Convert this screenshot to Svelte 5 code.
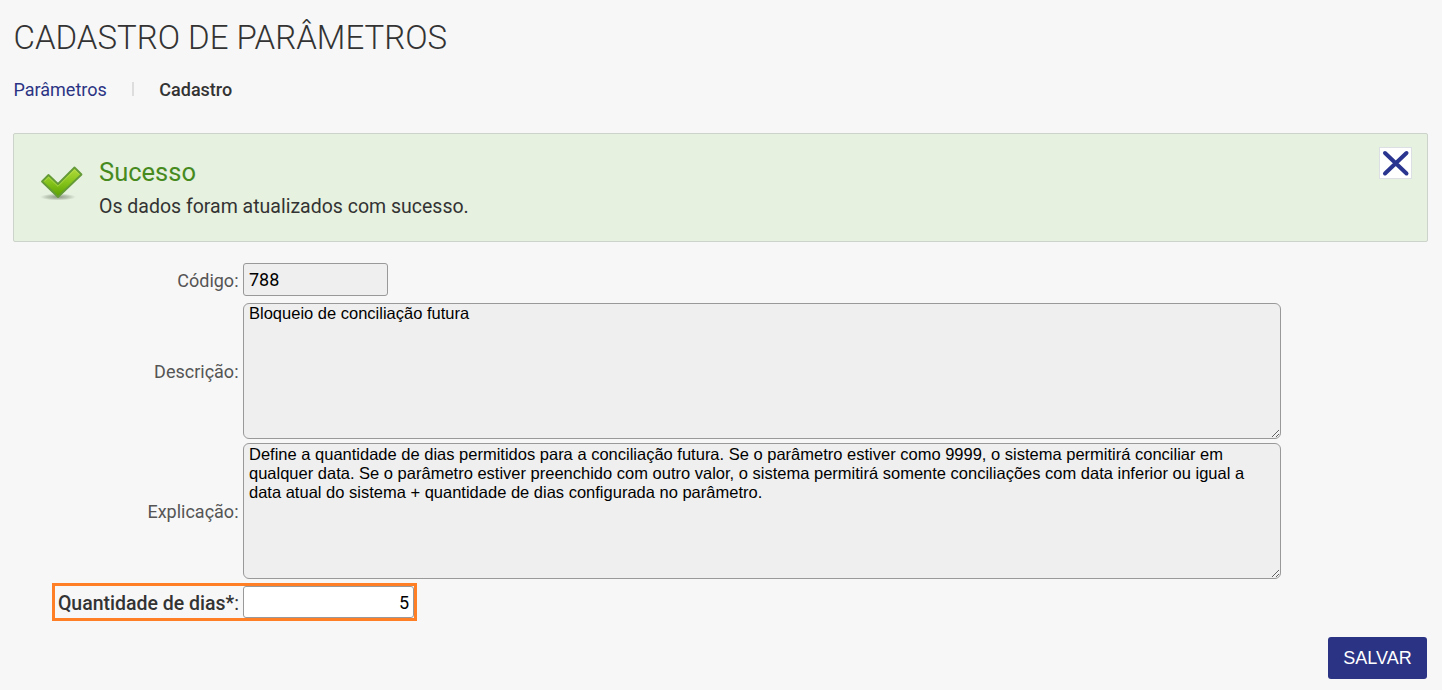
<script>
  let codigo = $state('788');
  let descricao = $state('Bloqueio de conciliação futura');
  let explicacao = $state(
    'Define a quantidade de dias permitidos para a conciliação futura. Se o parâmetro estiver como 9999, o sistema permitirá conciliar em qualquer data. Se o parâmetro estiver preenchido com outro valor, o sistema permitirá somente conciliações com data inferior ou igual a data atual do sistema + quantidade de dias configurada no parâmetro.'
  );
  let dias = $state('5');
  let showMessage = $state(true);
</script>

<main>
  <h1>CADASTRO DE PARÂMETROS</h1>

  <nav>
    <a href="#parametros">Parâmetros</a>
    <span class="separator"></span>
    <strong>Cadastro</strong>
  </nav>

  {#if showMessage}
    <section class="message">
      <svg class="check" width="44" height="36" viewBox="0 0 44 36">
        <defs>
          <linearGradient id="green" x1="0" y1="0" x2="0" y2="1">
            <stop offset="0" stop-color="#b5dc3c" />
            <stop offset="0.5" stop-color="#86c41c" />
            <stop offset="1" stop-color="#5aa000" />
          </linearGradient>
          <radialGradient id="shadow">
            <stop offset="0" stop-color="#64705c" stop-opacity="0.7" />
            <stop offset="0.6" stop-color="#7c8974" stop-opacity="0.4" />
            <stop offset="1" stop-color="#8c9884" stop-opacity="0" />
          </radialGradient>
        </defs>
        <ellipse cx="18" cy="31" rx="18" ry="3.5" fill="url(#shadow)" />
        <path d="M2 15.5L8.5 9L18 18L34.5 1.5L41.5 8.5L18 31Z" fill="url(#green)" stroke="#649b36" stroke-width="1.8" stroke-linejoin="round" />
        <path d="M4.2 15.5L8.5 11.2L18 20.3L34.5 3.8L39.2 8.5" fill="none" stroke="#c3e565" stroke-width="0.8" opacity="0.7" />
      </svg>
      <div class="message-text">
        <h2>Sucesso</h2>
        <p>Os dados foram atualizados com sucesso.</p>
      </div>
      <button class="close" aria-label="Fechar" onclick={() => (showMessage = false)}>
        <svg width="31" height="30" viewBox="0 0 31 30">
          <path d="M5 5L26.5 25.5M26.5 5L5 25.5" stroke="#2a3590" stroke-width="4" stroke-linecap="round" />
        </svg>
      </button>
    </section>
  {/if}

  <form onsubmit={(e) => e.preventDefault()}>
    <div class="row row-codigo">
      <label for="codigo">Código:</label>
      <input id="codigo" class="codigo" bind:value={codigo} readonly />
    </div>
    <div class="row">
      <label for="descricao">Descrição:</label>
      <textarea id="descricao" class="descricao" bind:value={descricao} readonly spellcheck="false"></textarea>
    </div>
    <div class="row">
      <label for="explicacao">Explicação:</label>
      <textarea id="explicacao" bind:value={explicacao} readonly spellcheck="false"></textarea>
    </div>
    <div class="highlight">
      <label for="dias"><b>Quantidade de dias*</b>:</label>
      <input id="dias" class="dias" bind:value={dias} />
    </div>
    <div class="actions">
      <button class="save" type="submit">SALVAR</button>
    </div>
  </form>
</main>

<style>
  :global(body) {
    background: #f7f7f7;
  }

  main {
    box-sizing: border-box;
    height: 690px;
    padding: 19px 14px 0 13px;
    overflow: hidden;
    font-family: Roboto, 'Liberation Sans', sans-serif;
    font-size: 18px;
    color: #333;
  }

  h1 {
    margin: 0 0 0 0.5px;
    font-size: 33px;
    line-height: 38px;
    font-weight: 300;
  }

  nav {
    display: flex;
    align-items: center;
    height: 24px;
    margin-top: 20px;
    padding-left: 0.5px;
  }

  nav a {
    color: #2b3384;
    text-decoration: none;
  }

  .separator {
    width: 2px;
    height: 14px;
    margin: 0 25.5px 0 25px;
    background: #ddd;
  }

  nav strong {
    font-weight: 500;
  }

  .message {
    display: flex;
    align-items: flex-start;
    box-sizing: border-box;
    height: 109px;
    margin-top: 32px;
    padding: 14px 15px 0 26px;
    border: 1px solid #ccd3ca;
    border-radius: 2px;
    background: #e6f1df;
  }

  .check {
    margin-top: 18px;
  }

  .message-text {
    flex: 1;
    margin-left: 15px;
  }

  h2 {
    margin: 8px 0 0;
    font-size: 25.5px;
    line-height: 32px;
    font-weight: 400;
    color: #478a1e;
  }

  p {
    margin: 7px 0 0;
    font-size: 19.5px;
    line-height: 24px;
  }

  .close {
    display: flex;
    width: 33px;
    height: 32px;
    margin-top: -1px;
    padding: 0;
    border: 1px solid #dcdfe4;
    background: #fff;
  }

  form {
    margin-top: 21px;
  }

  .row {
    display: flex;
    align-items: center;
    gap: 4px;
    margin-bottom: 4px;
  }

  .row-codigo {
    margin-bottom: 7px;
  }

  .row label {
    width: 225.5px;
    margin-right: 0.5px;
    text-align: right;
    color: #555;
  }

  .row-codigo label {
    padding-top: 2px;
  }

  input,
  textarea {
    box-sizing: border-box;
    margin: 0;
    border: 1px solid #999;
    background: #efefef;
    color: #000;
  }

  input {
    height: 33px;
    padding: 1px 5px;
    border-radius: 3px;
    font: 18px Roboto, sans-serif;
  }

  textarea {
    width: 1038px;
    height: 136px;
    padding: 1px 5px;
    border-radius: 6px;
    font: 16.5px/19px 'Liberation Sans', Arial, sans-serif;
    resize: both;
  }

  .codigo {
    width: 145px;
  }

  .descricao {
    padding-top: 0;
  }

  .highlight {
    display: flex;
    align-items: center;
    justify-content: flex-end;
    gap: 4px;
    box-sizing: border-box;
    width: 365px;
    height: 38px;
    margin-left: 39px;
    border: 3px solid #ff7f27;
  }

  .highlight label {
    padding-top: 2px;
    font-size: 19.5px;
    white-space: nowrap;
  }

  .highlight b {
    font-weight: 500;
  }

  .dias {
    width: 171px;
    height: 32px;
    padding-right: 4px;
    background: #fff;
    text-align: right;
  }

  .actions {
    display: flex;
    justify-content: flex-end;
    margin-top: 16px;
    padding-right: 1px;
  }

  .save {
    width: 99px;
    height: 42px;
    padding: 0;
    border: 0;
    border-radius: 3px;
    background: #2b3384;
    color: #fff;
    font: 18px 'Liberation Sans', Arial, sans-serif;
  }
</style>
